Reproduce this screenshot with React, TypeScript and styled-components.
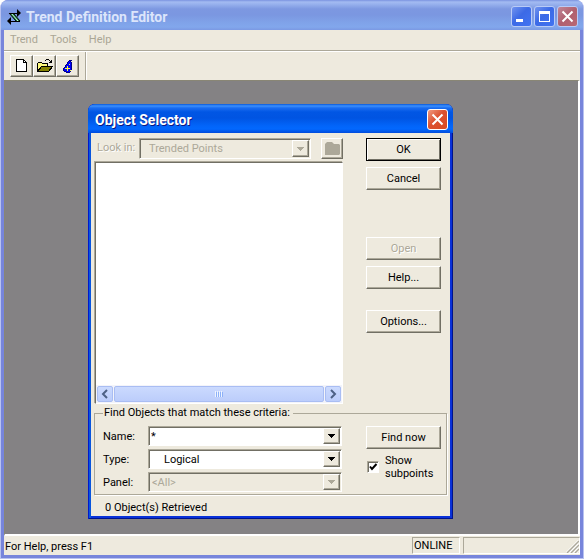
import React from "react";
import styled, { createGlobalStyle, css } from "styled-components";

const face = "#eeeade";
const shade = "#aca899";
const dark = "#716f64";
const uiFont = 'Roboto, "Liberation Sans", Arial, sans-serif';
const titleFont = 'Roboto, "Liberation Sans", sans-serif';

const GlobalStyle = createGlobalStyle`
  * { box-sizing: border-box; }
  body { margin: 0; background: #fff; font: 11px/14px ${uiFont}; color: #000; }
  button, input, select { font: inherit; color: inherit; margin: 0; border-radius: 0; }
`;

const raised = css`
  border: 1px solid;
  border-color: #fff ${dark} ${dark} #fff;
  box-shadow: inset -1px -1px 0 ${shade};
  background: ${face};
`;

const AppWindow = styled.div`
  position: relative;
  display: flex;
  flex-direction: column;
  min-height: 100vh;
  padding: 0 3px 3px;
  border: 1px solid #b8c2f0;
  border-top: 0;
  border-radius: 8px 8px 0 0;
  background: #7785db;
  overflow: hidden;
`;

const TitleBar = styled.header`
  display: flex;
  align-items: center;
  height: 30px;
  margin: 0 -3px;
  padding: 3px 2px 0 6px;
  background: linear-gradient(#7b93e0 0, #a3bbf1 2px, #98b2ee 4px, #7d98e1 9px, #7b97e1 15px, #80a3e9 23px, #82a7ec 27px, #7b99e3 30px);
`;

const Title = styled.h1`
  flex: 1;
  margin: 0 0 0 4px;
  font: bold 14px/18px ${titleFont};
  color: #dce5fb;
`;

const CaptionButton = styled.button<{ $kind: "blue" | "faded" | "red" }>`
  display: grid;
  place-items: center;
  width: 21px;
  height: 21px;
  padding: 0;
  border: 1px solid ${(p) => (p.$kind === "red" ? "#fff" : "#b9cbf6")};
  border-radius: 3px;
  background: ${(p) =>
    ({
      blue: "linear-gradient(135deg, #7193ee, #3c6ae6 45%, #4173f2)",
      faded: "linear-gradient(135deg, #c18798, #b0606f 50%, #b96873)",
      red: "linear-gradient(135deg, #f09a80, #dc5231 45%, #d94a20)",
    })[p.$kind]};
`;

const WindowButtons = styled.div`
  display: flex;
  gap: 2px;
  padding-right: 3px;
`;

const MenuBar = styled.nav`
  display: flex;
  gap: 12px;
  height: 21px;
  padding: 1px 6px 2px;
  background: ${face};
  border-bottom: 1px solid ${shade};
`;

const MenuItem = styled.button`
  padding: 0;
  border: 0;
  background: none;
  color: #aaa695;
`;

const ToolBar = styled.div`
  display: flex;
  height: 29px;
  padding-left: 6px;
  border-top: 1px solid #fff;
  background: ${face};
`;

const ToolGroup = styled.div`
  display: flex;
  padding: 3px 6px 2px 0;
  border-right: 1px solid ${shade};
  box-shadow: 1px 0 0 #fff;
`;

const ToolButton = styled.button`
  ${raised}
  display: grid;
  place-items: center;
  width: 23px;
  height: 22px;
  padding: 0;
`;

const Workspace = styled.main`
  position: relative;
  flex: 1;
  border: 1px solid #898675;
  border-right: 2px solid #fff;
  border-bottom: 2px solid #fff;
  background: #848284;
`;

const StatusBar = styled.footer`
  display: flex;
  gap: 3px;
  height: 19px;
  background: ${face};
`;

const StatusText = styled.span`
  flex: 1;
  padding: 4px 0 0 1px;
`;

const StatusPanel = styled.span<{ $w: number }>`
  display: flex;
  justify-content: flex-end;
  align-items: flex-end;
  width: ${(p) => p.$w}px;
  height: 17px;
  margin-top: 1px;
  border: 1px solid;
  border-color: ${shade} #fff #fff ${shade};
`;

const OnlineText = styled.span`
  flex: 1;
  padding-left: 1px;
`;

const Dialog = styled.section`
  position: absolute;
  left: 83px;
  top: 23px;
  width: 365px;
  padding: 0 3px 3px;
  border-radius: 7px 7px 0 0;
  background: #0831d9;
  box-shadow: inset 1px 0 0 #0019cf, inset -1px -1px 0 #00138c, inset 3px 0 0 #0855dd;
  overflow: hidden;
`;

const DialogTitleBar = styled.header`
  display: flex;
  align-items: center;
  height: 29px;
  margin: 0 -3px;
  padding: 2px 5px 0 7px;
  background: linear-gradient(#0958d8 0, #3c90fc 2px, #1a6cf0 4px, #0156e4 8px, #0054e2 14px, #0265fa 22px, #0268fe 25px, #004bdc 29px);
`;

const DialogTitle = styled.h2`
  flex: 1;
  margin: 0;
  font: bold 14px/18px ${titleFont};
  color: #fff;
  text-shadow: 1px 1px 0 #0a1883;
`;

const DialogBody = styled.div`
  padding: 5px 3px 0;
  background: ${face};
`;

const Upper = styled.div`
  display: flex;
  gap: 23px;
  padding: 0 6px 0 1px;
`;

const Browse = styled.div`
  flex: 1;
  display: flex;
  flex-direction: column;
  gap: 3px;
`;

const LookRow = styled.div`
  display: flex;
  height: 21px;
`;

const Label = styled.label<{ $off?: boolean }>`
  padding-top: 4px;
  white-space: nowrap;
  ${(p) => p.$off && `color: ${shade}; text-shadow: 1px 1px 0 #fff;`}
`;

const LookLabel = styled(Label)`
  width: 44px;
  padding: 3px 0 0 2px;
`;

const Combo = styled.div<{ $off?: boolean; $tall?: boolean }>`
  display: grid;
  flex: 1;
  height: ${(p) => (p.$tall ? 21 : 20)}px;
  border: 1px solid;
  border-color: ${shade} #fff #fff ${shade};
  box-shadow: inset 1px 1px 0 ${dark};
  background: ${(p) => (p.$off ? face : "#fff")};
  color: ${(p) => (p.$off ? shade : "#000")};
  > * { grid-area: 1 / 1; }
`;

const comboField = css`
  width: 100%;
  min-width: 0;
  height: 100%;
  border: 0;
  outline: 0;
  background: transparent;
  appearance: none;
`;

const Select = styled.select<{ $indent: number }>`
  ${comboField}
  padding: 1px 18px 0 ${(p) => p.$indent}px;
  &:disabled { color: ${shade}; opacity: 1; }
`;

const TextInput = styled.input`
  ${comboField}
  padding: 0 18px 0 2px;
`;

const ArrowBox = styled.span`
  ${raised}
  display: grid;
  place-items: center;
  justify-self: end;
  align-self: stretch;
  width: 17px;
  margin: 1px 1px 1px 0;
  pointer-events: none;
`;

const FolderButton = styled.button`
  ${raised}
  display: grid;
  place-items: center;
  width: 22px;
  margin-left: 10px;
  padding: 0;
`;

const List = styled.div`
  display: flex;
  flex-direction: column;
  justify-content: flex-end;
  height: 242px;
  border: 1px solid;
  border-color: ${dark} #fff #fff ${dark};
  box-shadow: -1px -1px 0 ${shade};
  background: #fff;
`;

const ScrollBar = styled.div`
  display: flex;
  gap: 1px;
  height: 18px;
  padding: 1px;
  background: #f3f4fa;
`;

const scrollPart = css`
  display: grid;
  place-items: center;
  padding: 0;
  border: 1px solid #a9bdf3;
  border-radius: 2px;
  background: linear-gradient(#cbdafe, #bccdfb);
`;

const ScrollArrow = styled.button`
  ${scrollPart}
  width: 16px;
`;

const Thumb = styled.div`
  ${scrollPart}
  flex: 1;
`;

const Actions = styled.div`
  display: flex;
  flex-direction: column;
  width: 75px;
`;

const Button = styled.button<{ $gap?: number; $default?: boolean }>`
  ${raised}
  width: 75px;
  height: 23px;
  margin-top: ${(p) => p.$gap ?? 0}px;
  padding: 0;
  ${(p) => p.$default && "border-color: #000; box-shadow: inset 1px 1px 0 #fff, inset -1px -1px 0 #716f64;"}
  &:disabled { color: ${shade}; text-shadow: 1px 1px 0 #fff; }
`;

const Criteria = styled.fieldset`
  display: flex;
  gap: 24px;
  min-width: 0;
  margin: 2px 0 0;
  padding: 6px 5px 2px 8px;
  border: 1px solid ${shade};
  box-shadow: 1px 1px 0 #fff;
`;

const Legend = styled.legend`
  padding: 0 3px 0 1px;
  background: ${face};
`;

const Fields = styled.div`
  flex: 1;
  display: flex;
  flex-direction: column;
  gap: 3px;
`;

const Field = styled.div`
  display: grid;
  grid-template-columns: 45px 1fr;
`;

const CheckLabel = styled.label`
  display: flex;
  align-items: center;
  gap: 6px;
  margin: 5px 0 0 1px;
  line-height: 13px;
`;

const CheckBox = styled.span`
  display: grid;
  width: 12px;
  height: 12px;
  border: 1px solid;
  border-color: ${shade} #fff #fff ${shade};
  box-shadow: inset 1px 1px 0 ${dark};
  background: #fff;
  > * { grid-area: 1 / 1; }
  input { width: 10px; height: 10px; appearance: none; }
  svg { visibility: hidden; pointer-events: none; }
  input:checked + svg { visibility: visible; }
`;

const Result = styled.p`
  margin: 5px 0 0 11px;
  line-height: 16px;
`;

const Close = () => (
  <svg width="13" height="13" viewBox="0 0 13 13" stroke="#fff" strokeWidth="2">
    <path d="M1.500 1.500l10 10M11.500 1.500l-10 10" />
  </svg>
);

const Arrow = ({ off }: { off?: boolean }) => (
  <ArrowBox>
    <svg width="7" height="4" viewBox="0 0 7 4" shapeRendering="crispEdges" fill={off ? shade : "#000"}>
      <path d="M0 0h7v1H0zM1 1h5v1H1zM2 2h3v1H2zM3 3h1v1H3z" />
    </svg>
  </ArrowBox>
);

const Chevron = ({ d }: { d: string }) => (
  <svg width="8" height="10" viewBox="0 0 8 10" fill="none" stroke="#4d6185" strokeWidth="2">
    <path d={d} />
  </svg>
);

export default function App() {
  return (
    <>
      <GlobalStyle />
      <AppWindow>
        <TitleBar>
          <svg width="15" height="16" viewBox="0 0 15 16">
            <path d="M2 4h4l7 8H9z" fill="#16833c" />
            <path d="M4 4l7 8" stroke="#d8f4dc" />
            <path d="M2 4l7 8M6 4l7 8" stroke="#000" />
            <path d="M2 4.500h9M4 12.500h9" stroke="#000" />
            <path d="M10 0l4 4-4 4zM4 8l-4 4 4 4z" fill="#000" />
          </svg>
          <Title>Trend Definition Editor</Title>
          <WindowButtons>
            <CaptionButton $kind="blue" aria-label="Minimize">
              <svg width="13" height="13" viewBox="0 0 13 13"><path d="M1 9h7v3H1z" fill="#fff" /></svg>
            </CaptionButton>
            <CaptionButton $kind="blue" aria-label="Maximize">
              <svg width="13" height="13" viewBox="0 0 13 13"><path fillRule="evenodd" d="M1 1h11v11H1zM2 4v7h9V4z" fill="#fff" /></svg>
            </CaptionButton>
            <CaptionButton $kind="faded" aria-label="Close"><Close /></CaptionButton>
          </WindowButtons>
        </TitleBar>
        <MenuBar>
          <MenuItem>Trend</MenuItem>
          <MenuItem>Tools</MenuItem>
          <MenuItem>Help</MenuItem>
        </MenuBar>
        <ToolBar>
          <ToolGroup>
            <ToolButton aria-label="New">
              <svg width="11" height="14" viewBox="0 0 11 14" shapeRendering="crispEdges">
                <path d="M.5.5h7l3 3v9H.5z" fill="#fff" stroke="#000" />
                <path d="M7.500.5v3h3" fill="none" stroke="#000" />
              </svg>
            </ToolButton>
            <ToolButton aria-label="Open file">
              <svg width="16" height="14" viewBox="0 0 16 14" shapeRendering="crispEdges">
                <path d="M.5 12.500v-8l1-1h3l1 1h5v3h-6z" fill="#fcf77c" stroke="#000" />
                <path d="M.5 12.500l4-5h11l-4 5z" fill="#848200" stroke="#000" />
                <path d="M9 0h3v1H9zM8 1h1v1H8zM12 1h1v1h-1zM14 1h1v3h-3V3h1V2h1z" fill="#000" />
              </svg>
            </ToolButton>
            <ToolButton aria-label="Object wizard">
              <svg width="10" height="13" viewBox="0 0 10 13" shapeRendering="crispEdges">
                <path d="M6 0h3v1h-1v1h1v8h-1v2H7v1H3v-1H1v-1H0V8h1V7h1V5h1V4h1V2h1V1h1z" fill="#000084" />
                <path d="M6 1h1v1h1v8H7v2H3v-1H1V8h1V7h1V5h1V4h1V2h1z" fill="#0000f8" />
                <path d="M4 6h1v2h2v1H5v2H4V9H2V8h2zM6 4h1v1H6zM7 10h1v1H7z" fill="#ffff42" />
              </svg>
            </ToolButton>
          </ToolGroup>
        </ToolBar>
        <Workspace>
          <Dialog role="dialog" aria-labelledby="dialog-title">
            <DialogTitleBar>
              <DialogTitle id="dialog-title">Object Selector</DialogTitle>
              <CaptionButton $kind="red" aria-label="Close dialog"><Close /></CaptionButton>
            </DialogTitleBar>
            <DialogBody>
              <Upper>
                <Browse>
                  <LookRow>
                    <LookLabel $off htmlFor="look">Look in:</LookLabel>
                    <Combo $off $tall>
                      <Select id="look" $indent={9} disabled><option>Trended Points</option></Select>
                      <Arrow off />
                    </Combo>
                    <FolderButton disabled aria-label="Up one level">
                      <svg width="15" height="13" viewBox="0 0 15 13" fill={shade}>
                        <path d="M0 2l2-2h5l2 2h5l1 1v9l-1 1H0z" />
                      </svg>
                    </FolderButton>
                  </LookRow>
                  <List>
                    <ScrollBar>
                      <ScrollArrow aria-label="Scroll left"><Chevron d="M6 1L2 5l4 4" /></ScrollArrow>
                      <Thumb>
                        <svg width="8" height="6" viewBox="0 0 8 6" shapeRendering="crispEdges">
                          <path d="M0 0h1v6H0zM2 0h1v6H2zM4 0h1v6H4zM6 0h1v6H6z" fill="#eef4fe" />
                          <path d="M1 1h1v5H1zM3 1h1v5H3zM5 1h1v5H5zM7 1h1v5H7z" fill="#8cb0f8" />
                        </svg>
                      </Thumb>
                      <ScrollArrow aria-label="Scroll right"><Chevron d="M2 1l4 4-4 4" /></ScrollArrow>
                    </ScrollBar>
                  </List>
                </Browse>
                <Actions>
                  <Button $default>OK</Button>
                  <Button $gap={6}>Cancel</Button>
                  <Button $gap={47} disabled>Open</Button>
                  <Button $gap={6}>Help...</Button>
                  <Button $gap={21}>Options...</Button>
                </Actions>
              </Upper>
              <Criteria>
                <Legend>Find Objects that match these criteria:</Legend>
                <Fields>
                  <Field>
                    <Label htmlFor="name">Name:</Label>
                    <Combo><TextInput id="name" defaultValue="*" /><Arrow /></Combo>
                  </Field>
                  <Field>
                    <Label htmlFor="type">Type:</Label>
                    <Combo><Select id="type" $indent={15}><option>Logical</option></Select><Arrow /></Combo>
                  </Field>
                  <Field>
                    <Label htmlFor="panel">Panel:</Label>
                    <Combo $off><Select id="panel" $indent={3} disabled><option>&lt;All&gt;</option></Select><Arrow off /></Combo>
                  </Field>
                </Fields>
                <Actions>
                  <Button>Find now</Button>
                  <CheckLabel>
                    <CheckBox>
                      <input type="checkbox" defaultChecked />
                      <svg width="10" height="10" viewBox="0 0 10 10"><path d="M2 4.500l2 2.500 4.500-5" fill="none" stroke="#000" strokeWidth="2" /></svg>
                    </CheckBox>
                    <span>Show<br />subpoints</span>
                  </CheckLabel>
                </Actions>
              </Criteria>
              <Result>0 Object(s) Retrieved</Result>
            </DialogBody>
          </Dialog>
        </Workspace>
        <StatusBar>
          <StatusText>For Help, press F1</StatusText>
          <StatusPanel $w={48}><OnlineText>ONLINE</OnlineText></StatusPanel>
          <StatusPanel $w={117}>
            <svg width="13" height="13" viewBox="0 0 13 13" fill="none">
              <path d="M1 13L13 1M5 13l8-8M9 13l4-4" stroke="#fff" strokeWidth="3" />
              <path d="M1 13L13 1M5 13l8-8M9 13l4-4" stroke={shade} strokeWidth="1.500" />
            </svg>
          </StatusPanel>
        </StatusBar>
      </AppWindow>
    </>
  );
}
